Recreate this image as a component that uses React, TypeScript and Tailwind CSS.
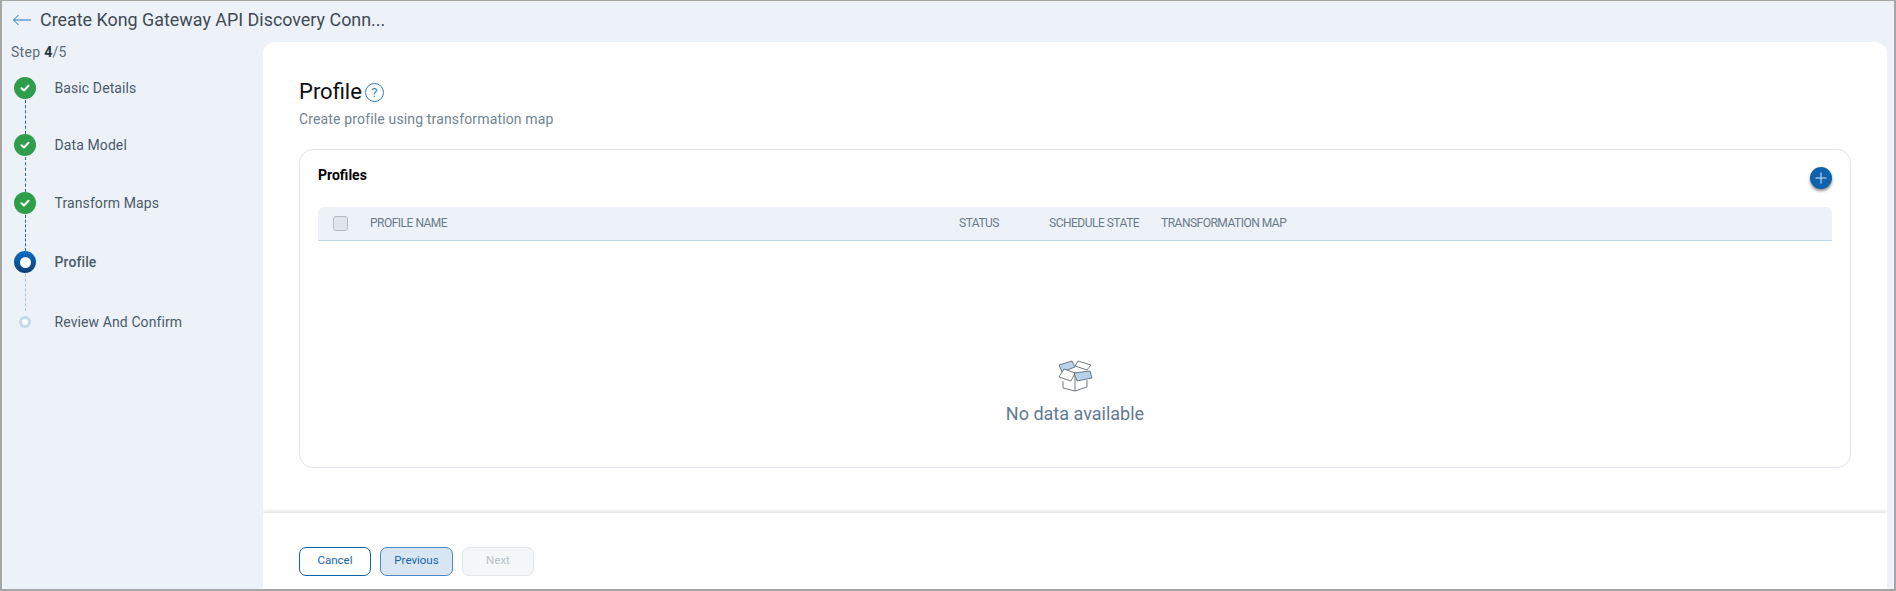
import React from "react";

const font = { fontFamily: "Roboto, sans-serif" };

function Check() {
  return (
    <div className="flex h-[22px] w-[22px] items-center justify-center rounded-full bg-[#2e9e4a]">
      <svg width="12" height="12" viewBox="0 0 12 12" fill="none" stroke="#fff" strokeWidth="2" strokeLinecap="round" strokeLinejoin="round">
        <path d="M2.5 6.2 5 8.5 9.5 3.8" />
      </svg>
    </div>
  );
}

function Current() {
  return (
    <div className="flex h-[22px] w-[22px] items-center justify-center rounded-full bg-gradient-to-b from-[#0b6fc4] to-[#0a3f78]">
      <div className="h-[11px] w-[11px] rounded-full bg-white" />
    </div>
  );
}

function Pending() {
  return (
    <div className="flex h-[22px] w-[22px] items-center justify-center">
      <div className="flex h-[12px] w-[12px] items-center justify-center rounded-full bg-[#c3d8ee]">
        <div className="h-[6px] w-[6px] rounded-full bg-white" />
      </div>
    </div>
  );
}

const steps = [
  { label: "Basic Details", kind: "done", h: "h-[57px]", line: "border-[#1f66ad]" },
  { label: "Data Model", kind: "done", h: "h-[58px]", line: "border-[#1f66ad]" },
  { label: "Transform Maps", kind: "done", h: "h-[59px]", line: "border-[#1f66ad]" },
  { label: "Profile", kind: "current", h: "h-[60px]", line: "border-[#a9c4de]" },
  { label: "Review And Confirm", kind: "pending", h: "h-[22px]", line: "" },
];

function Stepper() {
  return (
    <div className="mt-[15px] flex flex-col pl-[12px]">
      {steps.map((s, i) => (
        <div key={s.label} className={`flex ${s.h}`}>
          <div className="flex w-[22px] flex-col items-center">
            {s.kind === "done" && <Check />}
            {s.kind === "current" && <Current />}
            {s.kind === "pending" && <Pending />}
            {i < steps.length - 1 && <div className={`mt-[1px] flex-1 border-l border-dashed ${s.line}`} />}
          </div>
          <div
            className={`ml-[18.5px] h-[22px] text-[14px] leading-[22px] tracking-[0.1px] text-[#4a5a6a] ${
              s.kind === "current" ? "font-medium" : ""
            }`}
          >
            {s.label}
          </div>
        </div>
      ))}
    </div>
  );
}

function BoxIcon() {
  return (
    <svg width="36" height="32" viewBox="0 0 36 32" fill="none" stroke="#555c63" strokeWidth="0.8" strokeLinejoin="round">
      <path d="M2 5 15 1 18 7 5 12Z" fill="#b9d2ea" />
      <path d="M21 1 34 5 30 10 18 6Z" fill="#fff" />
      <path d="M6 21V28L18 31 30 27V20" fill="#fff" />
      <path d="M18 14V31" />
      <path d="M18 14 34 12 36 19 21 22Z" transform="translate(-1 -1)" fill="#b9d2ea" />
      <path d="M18 13 7 9 2 17 14 21Z" fill="#fff" />
    </svg>
  );
}

export default function App() {
  return (
    <div
      className="flex h-[591px] w-[1896px] flex-col overflow-hidden border-t border-r-2 border-b-2 border-l-2 border-[#a6a6a6] bg-[#edf2f9]"
      style={font}
    >
      <div className="flex h-[41px] shrink-0 items-center pl-[11px] pb-[3px]">
        <svg width="20" height="12" viewBox="0 0 20 12" fill="none" stroke="#1f72b8" strokeWidth="1">
          <path d="M0.5 6H18M5.5 1 .5 6l5 5" />
        </svg>
        <div className="ml-[7px] text-[17.9px] text-[#3f4a55]">
          Create Kong Gateway API Discovery Conn...
        </div>
      </div>
      <div className="flex min-h-0 flex-1">
        <div className="w-[261px] shrink-0">
          <div className="pl-[9px] text-[14px] leading-[20px] tracking-[0.3px] text-[#5d6b78]">
            Step <b className="font-bold text-[#2c343c]">4</b>/5
          </div>
          <Stepper />
        </div>
        <div className="mr-[7px] flex min-w-0 flex-1 flex-col overflow-hidden rounded-t-[12px] bg-white">
          <div className="h-[471px] shrink-0 px-[36px] pt-[37px]">
            <div className="flex items-center">
              <span className="text-[22px] leading-[26px] text-[#0b0f14]">Profile</span>
              <span className="ml-[3px] flex h-[19px] w-[19px] items-center justify-center rounded-full border border-[#2f7fc4] text-[13px] leading-none text-[#2f7fc4]">
                ?
              </span>
            </div>
            <div className="mt-[5px] text-[14px] leading-[18px] tracking-[0.15px] text-[#6f8596]">
              Create profile using transformation map
            </div>
            <div className="mt-[21px] h-[319px] rounded-[14px] border border-[#dfe5ea] px-[18px]">
              <div className="flex h-[57px] items-start justify-between">
                <div className="mt-[16px] text-[14px] font-bold leading-[18px] text-black">Profiles</div>
                <button className="mt-[17px] flex h-[22px] w-[22px] items-center justify-center rounded-full bg-[#0f62ad] shadow-[0_2px_3px_rgba(0,0,0,0.45)]">
                  <svg width="12" height="12" viewBox="0 0 12 12" stroke="#d9e8f6" strokeWidth="1">
                    <path d="M6 .5v11M.5 6h11" />
                  </svg>
                </button>
              </div>
              <div className="flex h-[34px] items-center rounded-t-[6px] border-b border-[#bcd7ee] bg-[#edf2f9] pb-[1px] text-[12px] tracking-[-0.5px] text-[#6a7a88]">
                <div className="ml-[15px] h-[15px] w-[15px] rounded-[3px] border border-[#b3bdc6] bg-[#e0e5ea]" />
                <div className="ml-[22px] w-[589px]">PROFILE NAME</div>
                <div className="w-[90px]">STATUS</div>
                <div className="w-[112px]">SCHEDULE STATE</div>
                <div>TRANSFORMATION MAP</div>
              </div>
              <div className="flex flex-col items-center pt-[119px]">
                <BoxIcon />
                <div className="mt-[11px] text-[18px] leading-[22px] text-[#5f7a92]">No data available</div>
              </div>
            </div>
          </div>
          <div className="flex flex-1 items-start gap-[9px] px-[36px] pt-[34px] shadow-[0_-2px_4px_rgba(0,0,0,0.12)]">
            <button className="h-[29px] w-[72px] rounded-[7px] border border-[#0f62ad] bg-white pb-[1px] text-[11.5px] text-[#1566ad]">
              Cancel
            </button>
            <button className="h-[29px] w-[73px] rounded-[7px] border border-[#4a8ac6] bg-[#d8e5f3] pb-[1px] text-[11.5px] text-[#1566ad]">
              Previous
            </button>
            <button className="h-[29px] w-[72px] rounded-[7px] border border-[#e3e7eb] bg-[#f4f6f8] pb-[1px] text-[11.5px] text-[#b9bfc5]">
              Next
            </button>
          </div>
        </div>
      </div>
    </div>
  );
}
